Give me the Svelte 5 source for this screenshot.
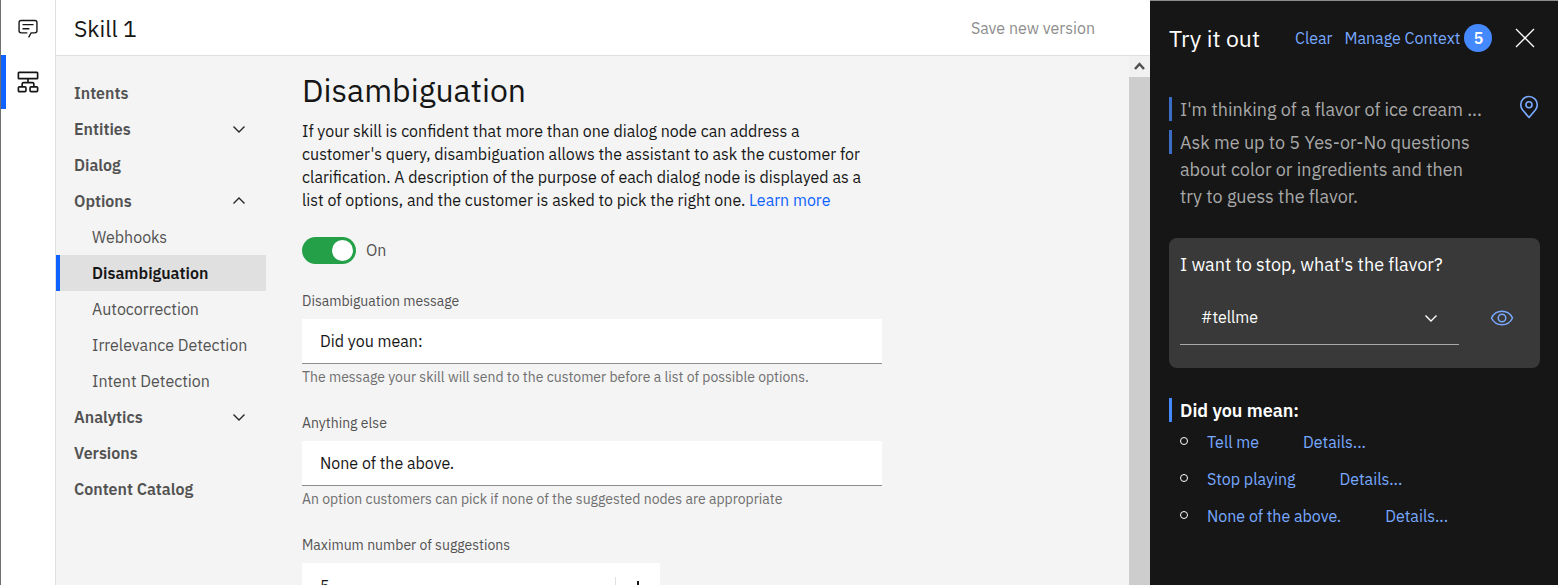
<script lang="ts">
  type NavItem = { label: string; open?: boolean; children?: string[] };

  const nav: NavItem[] = [
    { label: 'Intents' },
    { label: 'Entities', open: false },
    { label: 'Dialog' },
    {
      label: 'Options',
      open: true,
      children: ['Webhooks', 'Disambiguation', 'Autocorrection', 'Irrelevance Detection', 'Intent Detection']
    },
    { label: 'Analytics', open: false },
    { label: 'Versions' },
    { label: 'Content Catalog' }
  ];
  const current = 'Disambiguation';
  const suggestions = ['Tell me', 'Stop playing', 'None of the above.'];

  let enabled = $state(true);
  let message = $state('Did you mean:');
  let anythingElse = $state('None of the above.');
  let maximum = $state(5);
  let intent = $state('#tellme');
</script>

{#snippet chevron(up: boolean)}
  <svg class="chevron" viewBox="0 0 18 18" fill="none" stroke="currentColor" stroke-width="1.400" aria-hidden="true">
    <path d={up ? 'M3.500 11.500L9 6l5.500 5.500' : 'M3.500 6.500L9 12l5.500-5.500'} />
  </svg>
{/snippet}

<div class="app">
  <nav class="rail" aria-label="Products">
    <button aria-label="Assistants">
      <svg viewBox="0 0 32 32" aria-hidden="true">
        <path d="M17.740 30L16 29l4-7h6a2 2 0 0 0 2-2V8a2 2 0 0 0-2-2H6a2 2 0 0 0-2 2v12a2 2 0 0 0 2 2h9v2H6a4 4 0 0 1-4-4V8a4 4 0 0 1 4-4h20a4 4 0 0 1 4 4v12a4 4 0 0 1-4 4h-4.840z" />
        <path d="M8 10h16v2H8zM8 16h10v2H8z" />
      </svg>
    </button>
    <button class="active" aria-label="Skills">
      <svg viewBox="0 0 32 32" fill="none" stroke="currentColor" stroke-width="2.400" aria-hidden="true">
        <rect x="2" y="2" width="28" height="9" rx="1" />
        <rect x="2" y="23" width="11" height="7" rx="1.500" />
        <rect x="19" y="23" width="11" height="7" rx="1.500" />
        <path d="M16 11v6M7.500 23v-4a2 2 0 0 1 2-2h13a2 2 0 0 1 2 2v4" />
      </svg>
    </button>
  </nav>

  <div class="workspace">
    <header>
      <h2>Skill 1</h2>
      <button class="save" disabled>Save new version</button>
    </header>

    <div class="body">
      <nav class="side" aria-label="Skill">
        <ul>
          {#each nav as item}
            <li>
              {#if item.open === undefined}
                <a class="top" href="#top">{item.label}</a>
              {:else}
                <button class="top" aria-expanded={item.open}>{item.label}{@render chevron(item.open)}</button>
              {/if}
              {#if item.children}
                <ul>
                  {#each item.children as child}
                    <li><a class="sub" class:current={child === current} href="#top">{child}</a></li>
                  {/each}
                </ul>
              {/if}
            </li>
          {/each}
        </ul>
      </nav>

      <main>
        <h1>Disambiguation</h1>
        <p class="intro">
          If your skill is confident that more than one dialog node can address a customer's query,
          disambiguation allows the assistant to ask the customer for clarification. A description of the
          purpose of each dialog node is displayed as a list of options, and the customer is asked to pick
          the right one. <a href="#top">Learn more</a>
        </p>
        <label class="toggle">
          <input type="checkbox" role="switch" bind:checked={enabled} />
          <span>{enabled ? 'On' : 'Off'}</span>
        </label>

        <div class="field">
          <label for="message">Disambiguation message</label>
          <input id="message" type="text" bind:value={message} />
          <p>The message your skill will send to the customer before a list of possible options.</p>
        </div>
        <div class="field">
          <label for="else">Anything else</label>
          <input id="else" type="text" bind:value={anythingElse} />
          <p>An option customers can pick if none of the suggested nodes are appropriate</p>
        </div>
        <div class="field">
          <label for="max">Maximum number of suggestions</label>
          <div class="number">
            <input id="max" type="text" inputmode="numeric" bind:value={maximum} />
            <button class="minus" aria-label="Decrease" onclick={() => maximum--}>
              <svg viewBox="0 0 18 18" aria-hidden="true"><path d="M4 8h10v1H4z" /></svg>
            </button>
            <button class="plus" aria-label="Increase" onclick={() => maximum++}>
              <svg viewBox="0 0 18 18" aria-hidden="true"><path d="M8 4h2v4h4v1h-4v5H8V9H4V8h4z" /></svg>
            </button>
          </div>
        </div>
      </main>

      <div class="scrollbar" aria-hidden="true">
        <svg viewBox="0 0 21 21"><path d="M6 13l4.500-5 4.500 5" fill="none" stroke="#505050" stroke-width="2.500" /></svg>
        <div class="thumb"></div>
      </div>
    </div>
  </div>

  <aside>
    <div class="try-head">
      <h2>Try it out</h2>
      <button class="link">Clear</button>
      <button class="link">Manage Context</button>
      <span class="badge">5</span>
      <button class="close" aria-label="Close">
        <svg viewBox="0 0 20 20" fill="none" stroke="currentColor" aria-hidden="true"><path d="M1 1l18 18M19 1L1 19" stroke-width="1.300" /></svg>
      </button>
    </div>

    <div class="turn dim">
      <p class="bot">I'm thinking of a flavor of ice cream ...</p>
      <button class="pin" aria-label="Show in dialog">
        <svg viewBox="0 0 32 32" fill="none" stroke="currentColor" stroke-width="2.200" aria-hidden="true">
          <path d="M16 30L7.500 20C5.700 17.800 5 15.700 5 13a11 11 0 0 1 22 0c0 2.700-.7 4.800-2.500 7z" stroke-linejoin="round" />
          <circle cx="16" cy="13" r="4" />
        </svg>
      </button>
    </div>
    <p class="bot dim long">Ask me up to 5 Yes-or-No questions about color or ingredients and then try to guess the flavor.</p>

    <section class="card">
      <p>I want to stop, what's the flavor?</p>
      <div class="intent">
        <div class="select">
          <select aria-label="Intent" bind:value={intent}>
            <option>#tellme</option>
          </select>
          {@render chevron(false)}
        </div>
        <button class="eye" aria-label="Show entities">
          <svg viewBox="0 0 32 32" fill="none" stroke="currentColor" stroke-width="2" aria-hidden="true">
            <path d="M2 16C4.700 10.400 10 7 16 7s11.300 3.400 14 9c-2.700 5.600-8 9-14 9S4.700 21.600 2 16z" />
            <circle cx="16" cy="16" r="5" />
          </svg>
        </button>
      </div>
    </section>

    <p class="bot strong">Did you mean:</p>
    <ul class="suggestions">
      {#each suggestions as suggestion}
        <li>
          <i></i>
          <button class="link">{suggestion}</button>
          <button class="link">Details...</button>
        </li>
      {/each}
    </ul>
  </aside>
</div>

<style>
  :global(body) {
    margin: 0;
    overflow: hidden;
  }
  .app, .app * {
    box-sizing: border-box;
  }
  .app {
    display: flex;
    height: 100vh;
    background: #fff;
    color: #161616;
    font: 16px/23px "IBM Plex Sans", Roboto, sans-serif;
    border-left: 1px solid #6f6f6f;
  }
  h1, h2, p, ul {
    margin: 0;
    padding: 0;
    font-weight: 400;
    list-style: none;
  }
  button, input, select {
    font: inherit;
    color: inherit;
    background: none;
    border: 0;
    border-radius: 0;
    padding: 0;
    margin: 0;
    appearance: none;
    outline: none;
  }
  a {
    color: #0f62fe;
    text-decoration: none;
  }
  svg {
    display: block;
    fill: currentColor;
  }
  svg[fill="none"] {
    fill: none;
  }
  .chevron {
    width: 18px;
    height: 18px;
    flex: none;
  }

  .rail {
    flex: none;
    width: 55px;
    border-right: 1px solid #e0e0e0;
  }
  .rail button {
    display: flex;
    align-items: center;
    justify-content: center;
    width: 100%;
    height: 54px;
    border-left: 5px solid transparent;
    padding-right: 5px;
  }
  .rail button:first-child {
    height: 55px;
  }
  .rail .active {
    border-color: #0f62fe;
  }
  .rail svg {
    width: 22px;
    height: 22px;
  }

  .workspace {
    flex: 1;
    min-width: 0;
    display: flex;
    flex-direction: column;
  }
  header {
    flex: none;
    height: 56px;
    padding: 1px 55px 0 18px;
    display: flex;
    align-items: center;
    justify-content: space-between;
    border-bottom: 1px solid #e0e0e0;
  }
  h2 {
    font-size: 23px;
    line-height: 28px;
  }
  .save {
    color: #8d8d8d;
  }
  .body {
    flex: 1;
    min-height: 0;
    display: flex;
    background: #f4f4f4;
    overflow: hidden;
  }
  .side {
    flex: none;
    width: 210px;
    padding-top: 19px;
  }
  .top, .sub {
    display: flex;
    align-items: center;
    justify-content: space-between;
    width: 100%;
    height: 36px;
    padding: 0 18px;
    color: #525252;
    text-align: left;
  }
  .top {
    font-weight: 600;
  }
  .top .chevron {
    color: #262626;
  }
  .sub {
    padding-left: 32px;
    border-left: 4px solid transparent;
  }
  .sub.current {
    background: #e0e0e0;
    border-color: #0f62fe;
    color: #161616;
    font-weight: 600;
  }

  main {
    flex: 1;
    min-width: 0;
    padding: 13px 36px 0;
  }
  h1 {
    font-size: 32px;
    line-height: 42px;
  }
  .intro {
    max-width: 580px;
    margin-top: 9px;
  }
  .toggle {
    display: flex;
    align-items: center;
    gap: 10px;
    margin-top: 25px;
    width: max-content;
    color: #525252;
  }
  .toggle input {
    width: 54px;
    height: 27px;
    padding: 3px;
    border-radius: 14px;
    background: #8d8d8d;
  }
  .toggle input::before {
    content: "";
    display: block;
    width: 21px;
    height: 21px;
    border-radius: 50%;
    background: #fff;
  }
  .toggle input:checked {
    background: #24a148;
  }
  .toggle input:checked::before {
    margin-left: auto;
  }
  .field {
    max-width: 580px;
    margin-top: 28px;
    font-size: 14px;
    line-height: 18px;
  }
  .field label {
    display: block;
    color: #525252;
    margin-bottom: 9px;
  }
  .field input {
    display: block;
    width: 100%;
    height: 45px;
    padding: 0 18px;
    background: #fff;
    border-bottom: 1px solid #8d8d8d;
    font-size: 16px;
  }
  .field p {
    margin-top: 4px;
    color: #6f6f6f;
  }
  .number {
    display: flex;
    align-items: stretch;
    max-width: 358px;
    background: #fff;
    border-bottom: 1px solid #8d8d8d;
  }
  .number input {
    flex: 1;
    min-width: 0;
    border: 0;
  }
  .number button {
    width: 45px;
    display: grid;
    place-items: center;
  }
  .number svg {
    width: 18px;
    height: 18px;
  }
  .number .minus {
    color: #c6c6c6;
  }
  .number .plus {
    background: linear-gradient(#e0e0e0, #e0e0e0) left center / 1px 18px no-repeat;
  }

  .scrollbar {
    flex: none;
    width: 21px;
    background: #f1f1f1;
    display: flex;
    flex-direction: column;
  }
  .scrollbar svg {
    height: 21px;
  }
  .thumb {
    flex: 1;
    background: #cdcdcd;
  }

  aside {
    flex: none;
    width: 408px;
    padding: 19px 18px 0 19px;
    background: #161616;
    border-top: 1px solid #8d8d8d;
    color: #fff;
    font-size: 18px;
    line-height: 27px;
  }
  .try-head {
    display: flex;
    align-items: center;
    height: 36px;
  }
  .try-head h2 {
    width: 126px;
  }
  .link {
    color: #78a9ff;
    font-size: 16px;
  }
  .try-head .link + .link {
    margin-left: 12px;
  }
  .badge {
    width: 28px;
    height: 28px;
    margin-left: 4px;
    border-radius: 50%;
    background: #4589ff;
    font-size: 16px;
    font-weight: 600;
    line-height: 28px;
    text-align: center;
  }
  .close {
    margin-left: auto;
    margin-right: 5px;
  }
  .close svg {
    width: 20px;
    height: 20px;
  }
  .turn {
    display: flex;
    justify-content: space-between;
    margin-top: 40px;
  }
  .bot {
    padding-left: 8px;
    border-left: 3px solid transparent;
    background: linear-gradient(#4589ff, #4589ff) left 1px / 3px 24px no-repeat border-box;
  }
  .dim {
    color: #a8a8a8;
  }
  .dim.bot, .dim .bot {
    background-image: linear-gradient(#3b6dc4, #3b6dc4);
  }
  .pin {
    color: #78a9ff;
    height: 22px;
  }
  .pin svg {
    width: 24px;
    height: 24px;
    margin: -1px -1px 0 0;
  }
  .long {
    margin-top: 6px;
    padding-right: 60px;
  }
  .card {
    margin-top: 28px;
    height: 130px;
    padding: 13px 26px 0 11px;
    border-radius: 8px;
    background: #393939;
  }
  .intent {
    display: flex;
    align-items: center;
    justify-content: space-between;
    margin-top: 13px;
  }
  .select {
    flex: 1;
    max-width: 279px;
    display: flex;
    align-items: center;
    height: 54px;
    padding: 0 19px 0 21px;
    border-bottom: 1px solid #a8a8a8;
  }
  .select select {
    flex: 1;
    font-size: 16px;
    height: 53px;
  }
  .eye {
    color: #78a9ff;
  }
  .eye svg {
    width: 24px;
    height: 24px;
  }
  .strong {
    margin-top: 29px;
    font-weight: 600;
  }
  .suggestions {
    padding-left: 11px;
  }
  .suggestions li {
    display: flex;
    align-items: center;
    height: 37px;
  }
  .suggestions i {
    width: 8px;
    height: 8px;
    margin: 0 19px 4px 0;
    border: 1px solid #fff;
    border-radius: 50%;
  }
  .suggestions .link + .link {
    margin-left: 44px;
  }
</style>
